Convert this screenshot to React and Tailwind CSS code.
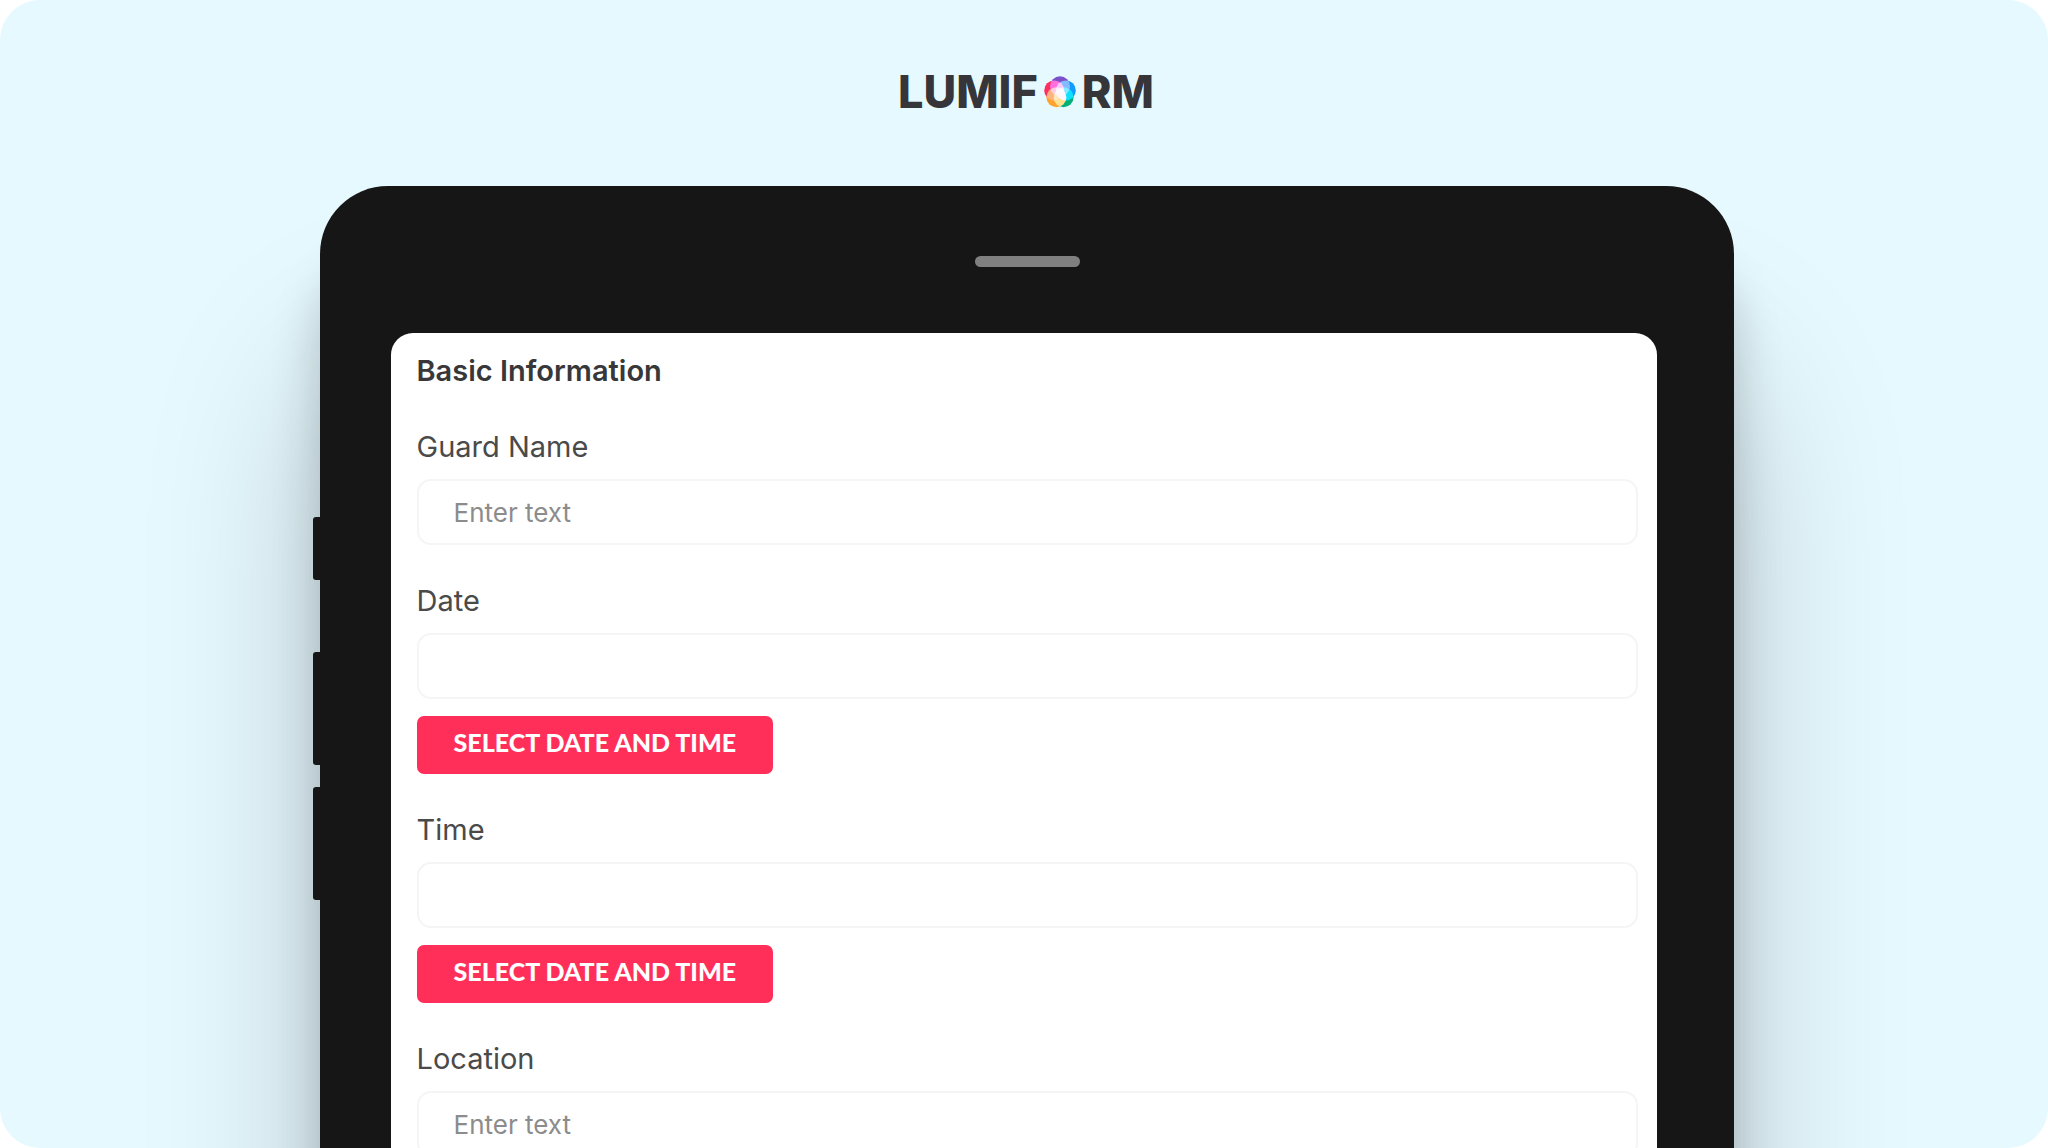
const labelClass = 'text-[29px] leading-8 text-[#4a4a4a]';
const inputClass =
  'mt-4 h-[66px] w-full rounded-[14px] border-2 border-[#f5f5f5] bg-white px-[35px] text-[26px] text-[#4a4a4a] outline-none placeholder:text-[#8c8c8c]';

const fields = [
  { id: 'guard-name', label: 'Guard Name', placeholder: 'Enter text' },
  { id: 'date', label: 'Date', picker: true },
  { id: 'time', label: 'Time', picker: true },
  { id: 'location', label: 'Location', placeholder: 'Enter text' },
];

const petals = [
  { cx: 16, cy: 10.2, fill: '#7c50c8' },
  { cx: 21.8, cy: 14.4, fill: '#109cff' },
  { cx: 19.6, cy: 21.3, fill: '#00b078' },
  { cx: 12.4, cy: 21.3, fill: '#ffa32e' },
  { cx: 10.2, cy: 14.4, fill: '#ff2d60' },
];

function Flower() {
  return (
    <svg viewBox="0 0 32 32" className="size-8 isolate" aria-hidden="true">
      {petals.map((p) => (
        <circle key={p.fill} cx={p.cx} cy={p.cy} r="10" fill={p.fill} className="mix-blend-screen" />
      ))}
    </svg>
  );
}

function Logo() {
  return (
    <div className="flex items-center justify-center gap-1.5 pt-16 pl-1 font-['Inter',sans-serif] text-[45px] leading-[56px] font-extrabold text-[#35353a]">
      <span>LUMIF</span>
      <Flower />
      <span>RM</span>
    </div>
  );
}

function Field({ id, label, placeholder, picker }) {
  return (
    <div className="flex flex-col items-start">
      <label htmlFor={id} className={labelClass}>
        {label}
      </label>
      <input id={id} type="text" placeholder={placeholder} className={inputClass} />
      {picker && (
        <button
          type="button"
          className="mt-[17px] h-[58px] rounded-[7px] bg-[#ff2f5a] px-[37px] pb-1 font-['Lato',sans-serif] text-[25px] font-black text-white"
        >
          SELECT DATE AND TIME
        </button>
      )}
    </div>
  );
}

export default function App() {
  return (
    <main className="h-screen overflow-hidden bg-white font-['Inter',sans-serif]">
      <div className="flex h-full flex-col overflow-hidden rounded-[40px] bg-[#e6f9ff]">
        <Logo />
        <div className="mt-[66px] flex justify-center pr-[26px] pl-6">
          <div className="z-10 flex w-[7px] shrink-0 flex-col pt-[331px]">
            <div className="h-[63px] rounded-l-[3px] bg-[#151615]" />
            <div className="mt-[72px] h-[113px] rounded-l-[3px] bg-[#151615]" />
            <div className="mt-[22px] h-[113px] rounded-l-[3px] bg-[#151615]" />
          </div>
          <div className="w-full max-w-[1414px] rounded-[68px] bg-[#151615] pr-[77px] pb-24 pl-[71px] shadow-[0_80px_50px_rgba(0,0,0,0.2),0_180px_180px_rgba(0,0,0,0.2)]">
            <div className="flex h-[147px] items-center justify-center pl-2">
              <div className="mt-1 h-[11px] w-[105px] rounded-full bg-[#808080]" />
            </div>
            <form className="flex flex-col gap-10 rounded-[22px] bg-white pt-[22px] pr-[19px] pb-10 pl-[26px]">
              <h1 className="mb-1 text-[29px] leading-8 font-semibold text-[#38383a]">Basic Information</h1>
              {fields.map((f) => (
                <Field key={f.id} {...f} />
              ))}
            </form>
          </div>
        </div>
      </div>
    </main>
  );
}
